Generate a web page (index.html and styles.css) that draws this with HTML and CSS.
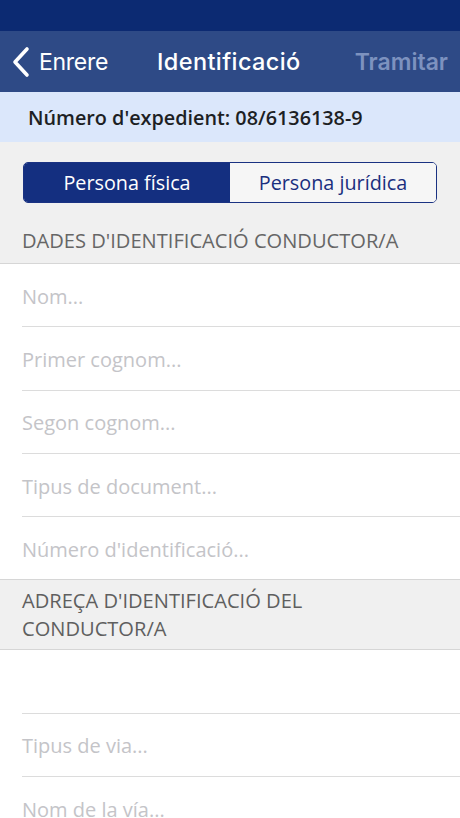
FILE: index.html
```html
<!DOCTYPE html>
<html lang="ca">
<head>
<meta charset="utf-8">
<title>Identificació</title>
<link rel="stylesheet" href="styles.css">
</head>
<body>
<div class="app">
  <div class="statusbar"></div>
  <header class="navbar">
    <div class="nav-back">
      <svg class="chev" width="20" height="32" viewBox="0 0 20 32"><path d="M16 3 L4 16 L16 29" fill="none" stroke="#fff" stroke-width="3.6" stroke-linecap="round" stroke-linejoin="round"/></svg>
      <span>Enrere</span>
    </div>
    <div class="nav-title">Identificació</div>
    <div class="nav-action">Tramitar</div>
  </header>
  <div class="expedient">Número d'expedient: 08/6136138-9</div>
  <div class="top-grey">
    <div class="segmented">
      <div class="seg seg-active">Persona física</div>
      <div class="seg">Persona jurídica</div>
    </div>
    <div class="section-title">DADES D'IDENTIFICACIÓ CONDUCTOR/A</div>
  </div>
  <div class="list">
    <div class="row"><span class="ph">Nom...</span></div>
    <div class="row"><span class="ph">Primer cognom...</span></div>
    <div class="row"><span class="ph">Segon cognom...</span></div>
    <div class="row"><span class="ph">Tipus de document...</span></div>
    <div class="row row-last"><span class="ph">Número d'identificació...</span></div>
  </div>
  <div class="section-grey">ADREÇA D'IDENTIFICACIÓ DEL<br>CONDUCTOR/A</div>
  <div class="list">
    <div class="row"><span class="ph"></span></div>
    <div class="row"><span class="ph">Tipus de via...</span></div>
    <div class="row"><span class="ph">Nom de la vía...</span></div>
  </div>
</div>
</body>
</html>
```

FILE: styles.css
```css
* { box-sizing: border-box; }
html, body { margin: 0; padding: 0; }
body {
  width: 460px;
  height: 818px;
  overflow: hidden;
  background: #fff;
  font-family: "Open Sans", "Noto Sans", sans-serif;
}
.app { display: flex; flex-direction: column; }
.statusbar { height: 31px; background: #0c2a72; }
.navbar {
  height: 61px;
  background: #2e4a86;
  display: flex;
  align-items: center;
  position: relative;
  font-family: Inter, "Liberation Sans", sans-serif;
  color: #fff;
}
.nav-back {
  display: flex;
  align-items: center;
  padding-left: 11px;
  gap: 8px;
  font-size: 23px;
  letter-spacing: -0.3px;
}
.chev { display: block; }
.nav-title {
  position: absolute;
  left: 157px;
  top: 0;
  line-height: 61px;
  font-size: 23.5px;
  font-weight: 500;
  letter-spacing: 0.4px;
}
.nav-action {
  margin-left: auto;
  padding-right: 12px;
  font-size: 23px;
  font-weight: 600;
  color: #7d92bf;
}
.expedient {
  height: 50px;
  background: #dbe7fb;
  display: flex;
  align-items: center;
  padding-left: 28px;
  font-size: 19.8px;
  font-weight: 600;
  color: #1d1f24;
}
.top-grey {
  background: #f0f0f0;
  padding-top: 20px;
  height: 122px;
  border-bottom: 1px solid #d6d6d6;
}
.segmented {
  margin: 0 23px 0 23px;
  height: 41px;
  display: flex;
  border: 1.5px solid #1a3282;
  border-radius: 5px;
  overflow: hidden;
}
.seg {
  flex: 1;
  display: flex;
  align-items: center;
  justify-content: center;
  font-size: 19.8px;
  color: #1a2f7e;
  background: #f6f6f6;
}
.seg-active { background: #142f80; color: #fff; }
.section-title {
  padding-left: 22px;
  margin-top: 24px;
  font-size: 20.1px;
  color: #666;
  line-height: 28px;
}
.list { background: #fff; }
.row {
  height: 63.3px;
  margin-left: 22px;
  border-bottom: 1px solid #dcdcdc;
  display: flex;
  align-items: center;
}
.row-last { margin-left: 0; padding-left: 22px; border-bottom: 1px solid #d6d6d6; }
.ph {
  font-size: 20px;
  color: #c4c4c8;
  padding-top: 2px;
}
.section-grey {
  background: #f0f0f0;
  height: 70px;
  padding: 7px 0 0 22px;
  font-size: 20.1px;
  line-height: 28px;
  color: #5f5f5f;
  border-bottom: 1px solid #d6d6d6;
}
```
